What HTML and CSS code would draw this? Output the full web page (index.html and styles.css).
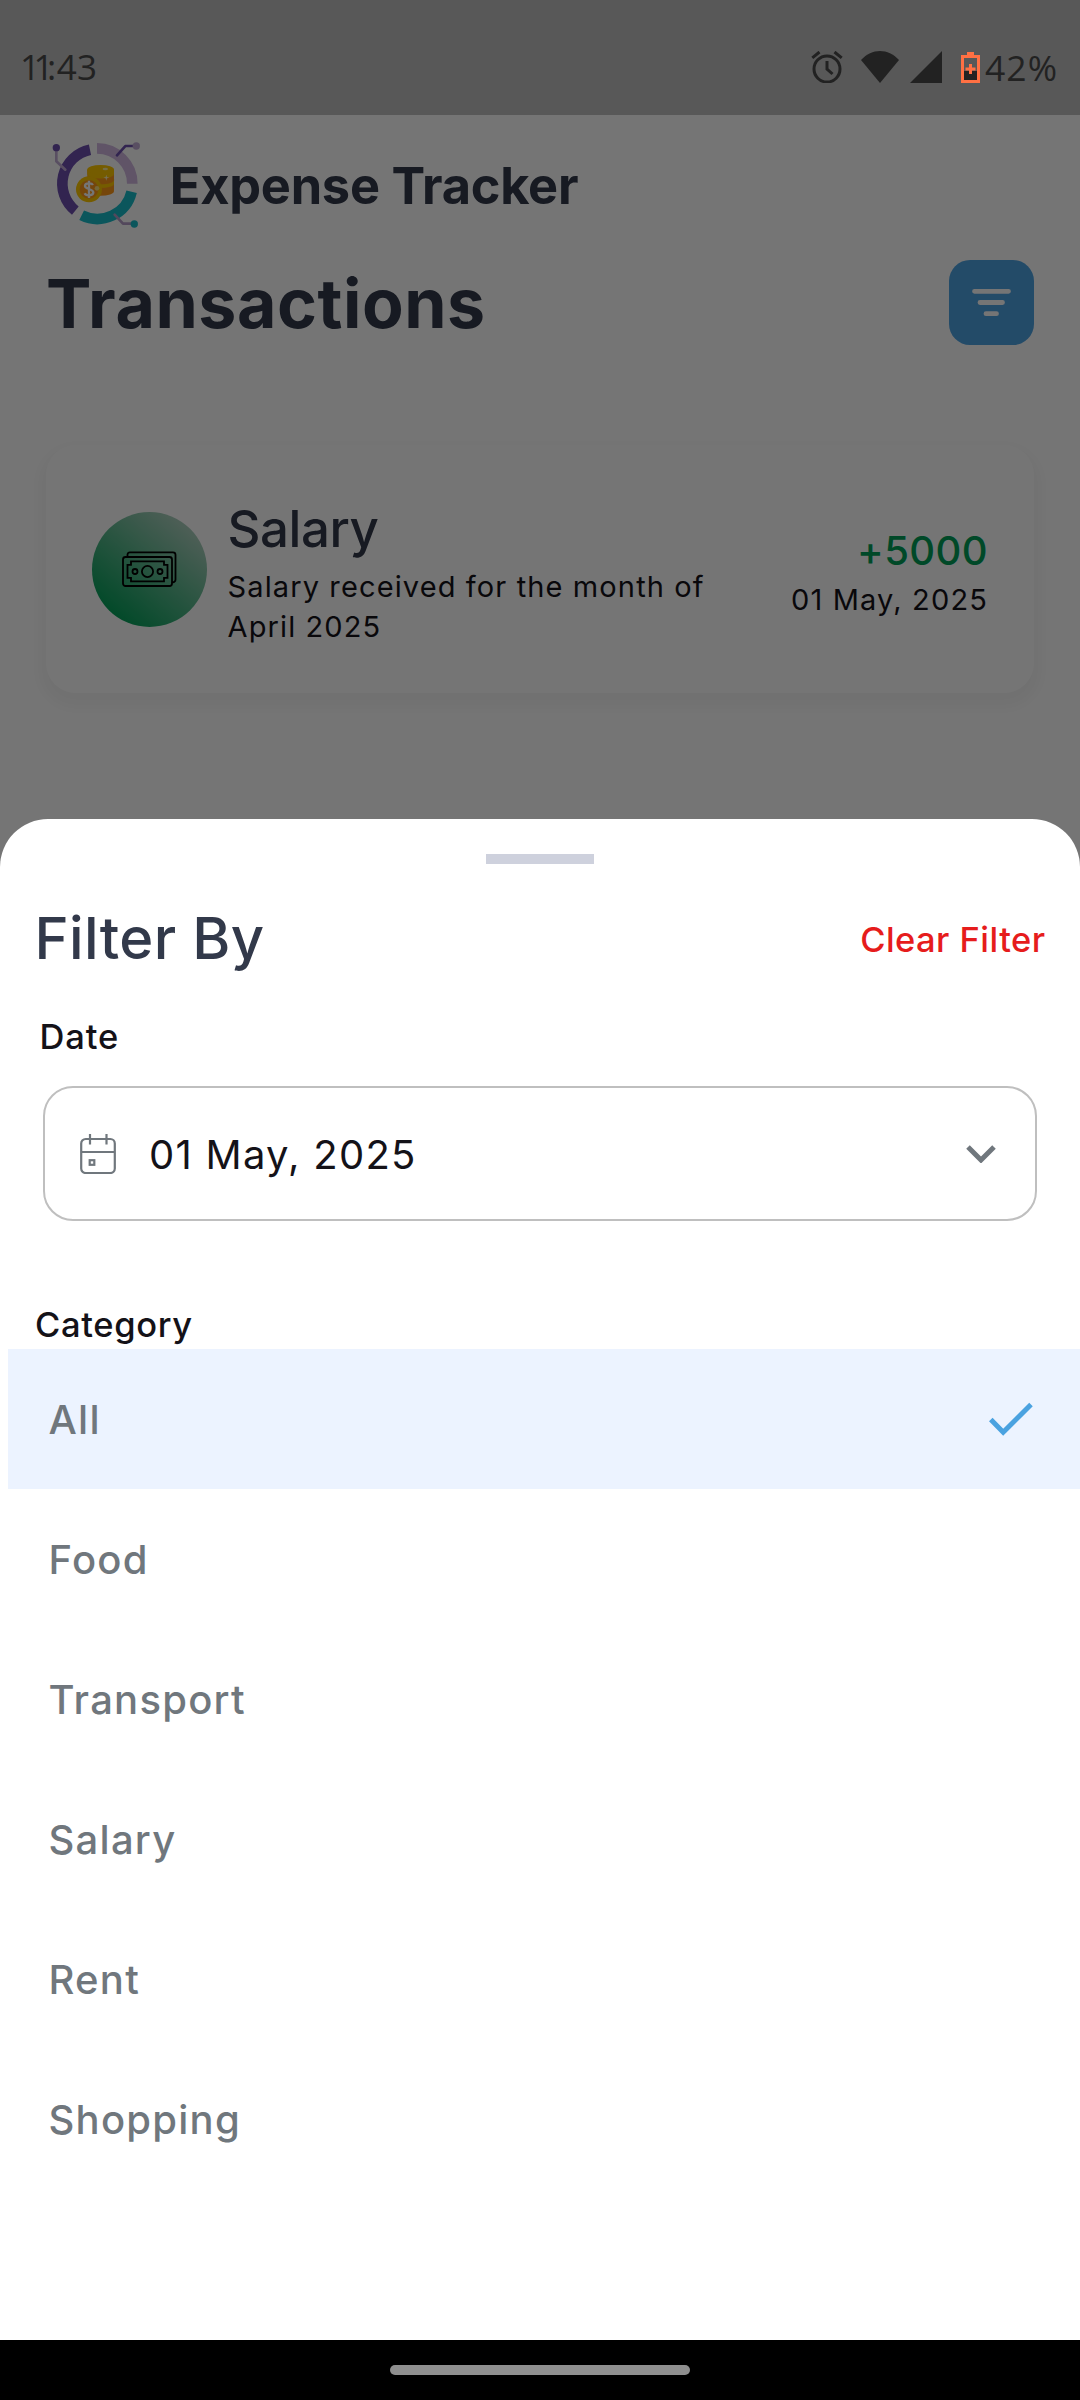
FILE: index.html
```html
<!DOCTYPE html>
<html lang="en">
<head>
<meta charset="utf-8">
<title>Expense Tracker</title>
<link rel="stylesheet" href="styles.css">
</head>
<body>
<div class="screen">
  <div class="status-bar">
    <span class="clock"><span class="ones">11</span>:43</span>
    <div class="status-icons">
      <svg class="icon-alarm" viewBox="0 0 32 32" fill="none" stroke="#222" stroke-width="3"><circle cx="16" cy="18" r="13"/><path d="M16 10v8l5.500 5M1.300 6.800 8.500 1M30.700 6.800 23.500 1"/></svg>
      <svg class="icon-wifi" viewBox="0 0 38 32" fill="#222"><path d="M0 9C11-3 27-3 38 9L19 32z"/></svg>
      <svg class="icon-signal" viewBox="0 0 32 32" fill="#222"><path d="M32 0v32H0z"/></svg>
      <svg class="icon-battery" viewBox="0 0 19 31"><path d="M6 0h7v3h6v28H0V3h6z" fill="#ff7043"/><path d="M3 6h13v13H3z" fill="#585858"/><path d="M3 19h13v9H3z" fill="#222"/><path d="M8 12h3v3.500h3.500v3H11V22H8v-3.500H4.500v-3H8z" fill="#ff7043"/></svg>
      <span class="percent">42%</span>
    </div>
  </div>

  <main class="app">
    <header class="brand">
      <svg class="logo" viewBox="60 60 280 270">
        <g fill="none" stroke-width="32">
          <path d="M180 89A104 104 0 0 0 136 272" stroke="#6d50ae"/>
          <path d="M201 85A106 106 0 0 1 307 191" stroke="#d1b8e0"/>
          <path d="M305 215A106 106 0 0 1 155 286" stroke="#1abcc8"/>
        </g>
        <g fill="none" stroke-width="8" stroke-linecap="round" stroke-linejoin="round">
          <path d="M79 84v40l27 25" stroke="#c3add6"/>
          <path d="M261 106l25-28h30" stroke="#6d50ae"/>
          <path d="M254 284l25 27h30" stroke="#b59dc8"/>
        </g>
        <circle cx="79" cy="83" r="11" fill="#6d50ae"/>
        <circle cx="319" cy="78" r="11" fill="#c3add6"/>
        <circle cx="313" cy="312" r="11" fill="#1abcc8"/>
        <path d="M172 150v64a39 13 0 0 0 80 0v-64z" fill="#ff9a1a"/>
        <path d="M172 148v14a39 13 0 0 0 80 0v-14zM172 182v9a39 13 0 0 0 80 0v-14a39 13 0 0 1-80 5z" fill="#ffc800"/>
        <ellipse cx="212" cy="149" rx="40" ry="14" fill="#ffc800"/>
        <ellipse cx="226" cy="147" rx="8" ry="4" fill="#ffefa0"/>
        <path d="M229 164l2 7 7 2-7 2-2 7-2-7-7-2 7-2z" fill="#fff3c0"/>
        <circle cx="177" cy="208" r="39" fill="#ffc800"/>
        <circle cx="177" cy="208" r="28" fill="#ff9a1a"/>
        <path d="M189 195c-4-7-24-7-24 3s25 8 25 19-22 12-26 3M177 182v52" fill="none" stroke="#fff" stroke-width="7"/>
        <circle cx="201" cy="205" r="7" fill="#ffe27a"/>
      </svg>
      <span class="brand-name">Expense Tracker</span>
    </header>

    <div class="title-row">
      <h1 class="title">Transactions</h1>
      <button class="filter-button" aria-label="Filter">
        <svg viewBox="0 0 85 85" fill="none" stroke="#fff" stroke-width="4.800" stroke-linecap="round"><path d="M25.500 31.300h34M31 42.500h22.500M37 53.700h10.500"/></svg>
      </button>
    </div>

    <article class="card">
      <div class="card-icon">
        <svg viewBox="0 0 55 36" fill="none" stroke="#000" stroke-width="1.800"><rect x="1" y="6" width="49" height="29" rx="2.500"/><path d="M5.500 6V3.500A2.500 2.500 0 0 1 8 1.300h43a2.500 2.500 0 0 1 2.500 2.500v24.700A2.500 2.500 0 0 1 50 31"/><path d="M9 10.300h33v3.500h3.500v13H42v3.500H9v-3.500H5.500v-13H9z"/><circle cx="25.500" cy="20.500" r="5.600"/><circle cx="13" cy="20.500" r="2.500"/><circle cx="38" cy="20.500" r="2.500"/></svg>
      </div>
      <div class="card-text">
        <h2 class="card-title">Salary</h2>
        <p class="card-desc">Salary received for the month of April 2025</p>
      </div>
      <div class="card-side">
        <span class="amount">+5000</span>
        <span class="card-date">01 May, 2025</span>
      </div>
    </article>
    <div class="scrim"></div>
  </main>

  <section class="sheet">
    <div class="handle"></div>
    <div class="sheet-head">
      <h2 class="sheet-title">Filter By</h2>
      <button class="clear">Clear Filter</button>
    </div>
    <span class="label label-date">Date</span>
    <div class="date-field">
      <svg class="icon-calendar" viewBox="0 0 36 40" fill="none" stroke="#70777d" stroke-width="2.200"><rect x="1.200" y="5" width="33.600" height="34" rx="4.500"/><path d="M1 18h34M10 0v10.500M26.500 0v10.500"/><rect x="9.700" y="26.200" width="4.600" height="4.600"/></svg>
      <span class="date-value">01 May, 2025</span>
      <svg class="icon-chevron" viewBox="0 0 30 18" fill="none" stroke="#70777d" stroke-width="5"><path d="M2 2l13 13L28 2"/></svg>
    </div>
    <span class="label label-category">Category</span>
    <ul class="categories">
      <li class="category selected"><span>All</span>
        <svg class="icon-check" viewBox="0 0 44 34" fill="none" stroke="#4aa2e0" stroke-width="5"><path d="M1.800 17.500l12.400 12.700L42 2.500"/></svg>
      </li>
      <li class="category">Food</li>
      <li class="category">Transport</li>
      <li class="category">Salary</li>
      <li class="category">Rent</li>
      <li class="category">Shopping</li>
    </ul>
  </section>

  <div class="nav-bar"><div class="nav-pill"></div></div>
</div>
</body>
</html>
```
FILE: styles.css
```css
* { box-sizing: border-box; margin: 0; padding: 0; }
body { width: 1080px; height: 2400px; background: #fff; font-family: Inter, sans-serif; color: #141218; }
button { border: 0; background: none; font: inherit; }
h1, h2 { font-weight: inherit; }
svg { display: block; flex: none; }

.screen { position: relative; display: flex; flex-direction: column; width: 1080px; height: 2400px; overflow: hidden; }

.status-bar { display: flex; justify-content: space-between; align-items: center; height: 115px; padding: 19px 22px 0 20px; background: #585858; color: #222; font: 35px/40px "Open Sans", sans-serif; }
.clock { letter-spacing: .4px; }
.ones { letter-spacing: -6.5px; }
.status-icons { display: flex; align-items: center; }
.icon-alarm { width: 32px; height: 32px; }
.icon-wifi { width: 38px; height: 32px; margin-left: 17.5px; }
.icon-signal { width: 32px; height: 32px; margin-left: 11.5px; }
.icon-battery { width: 19px; height: 31px; margin-left: 19px; }
.percent { margin-left: 5px; font-size: 35.5px; letter-spacing: 1px; }

.app { position: relative; flex: 1; padding: 25px 46px 0; background: #fff; color: #32394a; }
.brand { display: flex; align-items: center; height: 90px; padding-left: 4px; gap: 26.5px; }
.logo { width: 93.3px; height: 90px; }
.brand-name { font-size: 50.5px; font-weight: 700; letter-spacing: -.25px; }
.title-row { display: flex; align-items: center; justify-content: space-between; height: 85px; margin-top: 30px; }
.title { font-size: 68px; font-weight: 700; letter-spacing: .55px; }
.filter-button { width: 85px; height: 85px; border-radius: 21px; background: #4ea3e2; }

.card { display: flex; align-items: center; height: 248px; margin-top: 100px; padding: 0 46px; border-radius: 30px; background: #fff; box-shadow: 0 8px 14px 7px rgba(0, 0, 0, .035); color: #141218; }
.card-icon { display: grid; place-items: center; flex: none; width: 115px; height: 115px; border-radius: 50%; background: linear-gradient(40deg, #009f57 12%, #c0d4ca 95%); }
.card-icon svg { width: 55px; height: 36px; }
.card-text { flex: 1; padding-left: 20.5px; }
.card-title { font-size: 51px; line-height: 76px; font-weight: 500; letter-spacing: -.45px; color: #32394a; }
.card-desc { width: 500px; font-size: 29px; line-height: 40px; letter-spacing: 1.12px; }
.card-side { display: flex; flex-direction: column; align-items: flex-end; padding-top: 3px; }
.amount { font-size: 40px; line-height: 58px; font-weight: 500; letter-spacing: .4px; color: #009f57; }
.card-date { font-size: 29px; line-height: 40px; letter-spacing: 1.15px; }
.scrim { position: absolute; inset: 0; background: rgba(0, 0, 0, .54); }

.sheet { position: absolute; left: 0; top: 819px; width: 1080px; height: 1521px; display: flex; flex-direction: column; padding-top: 35px; border-radius: 48px 48px 0 0; background: #fff; }
.handle { align-self: center; width: 108px; height: 10px; background: #ced1dd; }
.sheet-head { display: flex; align-items: center; justify-content: space-between; height: 70px; margin-top: 39px; padding: 0 34.5px 0 34.5px; }
.sheet-title { font-size: 58px; line-height: 70px; font-weight: 500; letter-spacing: .35px; color: #32394a; }
.clear { padding-top: 2px; font-size: 34.5px; font-weight: 500; letter-spacing: .45px; color: #e61c1c; }
.label { font-size: 34.5px; line-height: 42px; font-weight: 500; letter-spacing: .65px; }
.label-date { margin: 43px 0 28px 39.5px; letter-spacing: .9px; }
.date-field { display: flex; align-items: center; height: 135px; margin: 0 43px; padding: 0 39.5px 0 35px; border: 2px solid #bfbfbf; border-radius: 30px; }
.icon-calendar { width: 36px; height: 40px; }
.date-value { flex: 1; padding: 1px 0 0 33px; font-size: 40px; letter-spacing: 1.25px; }
.icon-chevron { width: 30px; height: 18px; }
.label-category { margin: 83px 0 3px 35px; }
.categories { list-style: none; }
.category { display: flex; align-items: center; justify-content: space-between; height: 140px; margin-left: 8px; padding: 0 47px 0 40.5px; font-size: 40px; font-weight: 500; letter-spacing: 1.25px; color: #70777d; }
.selected { background: #ecf3ff; }
.icon-check { width: 44px; height: 34px; }

.nav-bar { display: grid; place-items: center; height: 60px; background: #000; }
.nav-pill { width: 300px; height: 10px; border-radius: 5px; background: #8f8f8f; }
```
